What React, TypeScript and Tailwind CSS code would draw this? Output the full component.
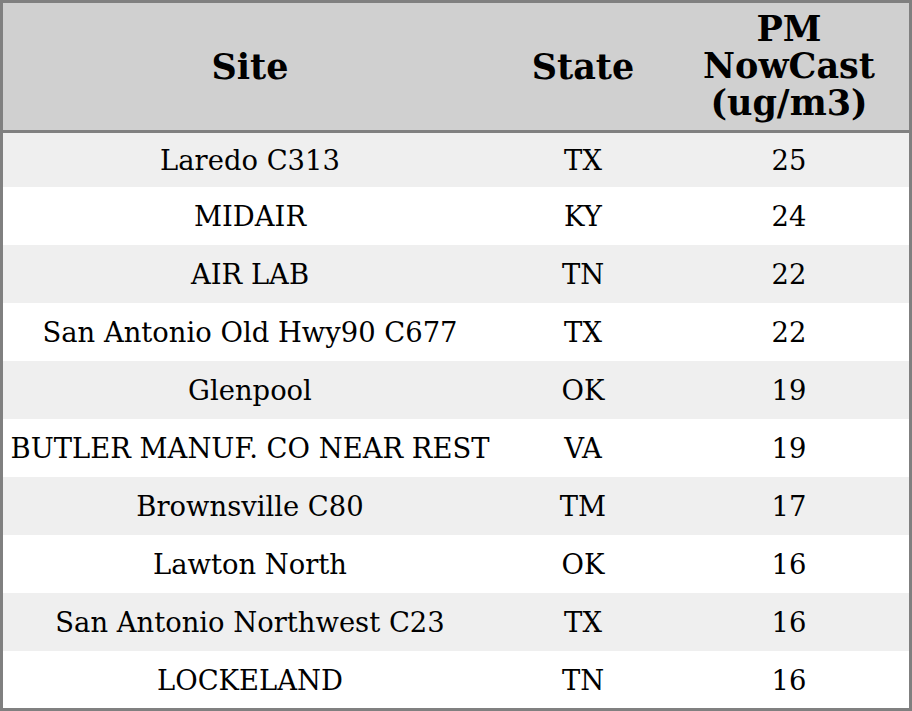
const rows = [
  { site: "Laredo C313", state: "TX", pm: 25 },
  { site: "MIDAIR", state: "KY", pm: 24 },
  { site: "AIR LAB", state: "TN", pm: 22 },
  { site: "San Antonio Old Hwy90 C677", state: "TX", pm: 22 },
  { site: "Glenpool", state: "OK", pm: 19 },
  { site: "BUTLER MANUF. CO NEAR REST", state: "VA", pm: 19 },
  { site: "Brownsville C80", state: "TM", pm: 17 },
  { site: "Lawton North", state: "OK", pm: 16 },
  { site: "San Antonio Northwest C23", state: "TX", pm: 16 },
  { site: "LOCKELAND", state: "TN", pm: 16 },
];

export default function App() {
  return (
    <div className="h-[711px] w-[912px] overflow-hidden bg-white font-['DejaVu_Serif',serif] text-black">
      <div className="h-full border-[3px] border-[#808080]">
        <table className="w-full table-fixed border-collapse">
          <colgroup>
            <col className="w-[494px]" />
            <col className="w-[172px]" />
            <col />
          </colgroup>
          <thead>
            <tr className="h-[128px] border-b-[3px] border-[#808080] bg-[#d0d0d0] text-[35px] font-bold leading-[37px]">
              <th className="p-0 text-center">Site</th>
              <th className="p-0 text-center">State</th>
              <th className="p-0 pb-[2px] text-center">
                PM
                <br />
                NowCast
                <br />
                (ug/m3)
              </th>
            </tr>
          </thead>
          <tbody className="text-[27.4px]">
            {rows.map((r, i) => (
              <tr
                key={r.site}
                className={
                  (i % 2 === 0 ? "bg-[#efefef] " : "bg-white ") +
                  (i === 0 ? "h-[56px]" : i === rows.length - 1 ? "h-[57px]" : "h-[58px]")
                }
              >
                <td className="p-0 pt-[2px] text-center whitespace-nowrap">{r.site}</td>
                <td className="p-0 pt-[2px] text-center">{r.state}</td>
                <td className="p-0 pt-[2px] text-center">{r.pm}</td>
              </tr>
            ))}
          </tbody>
        </table>
      </div>
    </div>
  );
}
